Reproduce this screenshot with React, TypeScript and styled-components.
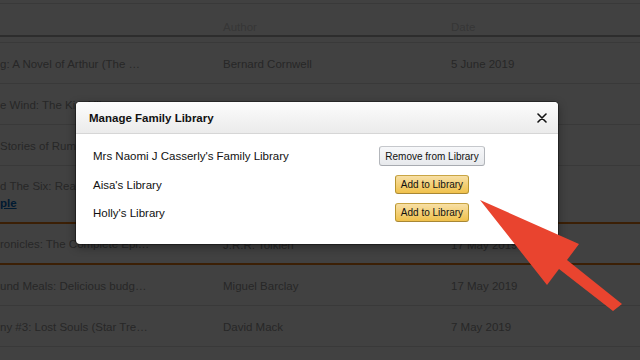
import React from 'react'
import styled, { createGlobalStyle, css } from 'styled-components'

type Book = {
  title: string
  link?: string
  author?: string
  date?: string
  highlighted?: boolean
}

// rows 2-4 sit behind the dialog, only the start of their titles shows
const books: Book[] = [
  { title: 'g: A Novel of Arthur (The …', author: 'Bernard Cornwell', date: '5 June 2019' },
  { title: 'e Wind: The Kingkiller' },
  { title: 'Stories of Rumpole' },
  { title: 'd The Six: Read', link: 'ple' },
  { title: 'ronicles: The Complete Epi…', author: 'J.R.R. Tolkien', date: '17 May 2019', highlighted: true },
  { title: 'und Meals: Delicious budg…', author: 'Miguel Barclay', date: '17 May 2019' },
  { title: 'ny #3: Lost Souls (Star Tre…', author: 'David Mack', date: '7 May 2019' },
  { title: 'ny #2: Mere Mortals (Star …', author: 'David Mack', date: '7 May 2019' },
]

const libraries = [
  { name: "Mrs Naomi J Casserly's Family Library", member: true },
  { name: "Aisa's Library", member: false },
  { name: "Holly's Library", member: false },
]

const GlobalStyle = createGlobalStyle`
  html, body {
    margin: 0;
    padding: 0;
    width: 640px;
    height: 360px;
    overflow: hidden;
    background: #fff;
  }
  body {
    font-family: "Liberation Sans", Arial, Helvetica, sans-serif;
    font-size: 11.5px;
    color: #111;
  }
`

const Page = styled.div`
  position: relative;
  width: 640px;
  height: 360px;
  overflow: hidden;
  padding-top: 3px;
  box-sizing: border-box;
`

const TopRule = styled.div`
  height: 1px;
  background: #e0e0e0;
`

const Columns = css`
  display: grid;
  grid-template-columns: 223px 228px 1fr;
  white-space: nowrap;
`

const HeaderRow = styled.div`
  ${Columns};
  height: 33px;
  align-items: center;
  padding-top: 14px;
  box-sizing: border-box;
  color: #d2d2d2;
  border-bottom: 2px solid #b2b2b2;
`

const HeaderGap = styled.div`
  height: 5px;
  border-bottom: 1px solid #e0e0e0;
`

const Row = styled.div<{ $highlighted?: boolean }>`
  ${Columns};
  min-height: 38px;
  padding-top: 2px;
  align-items: center;
  color: #999;
  border-bottom: 1px solid #e0e0e0;
  ${({ $highlighted }) =>
    $highlighted &&
    css`
      min-height: 34px;
      margin-top: -1px;
      border-top: 2px solid #e77a14;
      border-bottom: 2px solid #e77a14;
    `}
`

const TitleCell = styled.div`
  display: flex;
  flex-direction: column;
  line-height: 17px;
  padding: 10px 0;
  overflow: hidden;
`

const TitleLink = styled.a`
  color: #0066c0;
  font-weight: bold;
  text-decoration: underline;
`

const Overlay = styled.div`
  position: absolute;
  inset: 0;
  background: rgba(0, 0, 0, 0.745);
`

const Modal = styled.div`
  position: absolute;
  left: 76px;
  top: 102px;
  width: 482px;
  background: #fff;
  border-radius: 4px;
  overflow: hidden;
  box-shadow: 0 0 0 1px rgba(0, 0, 0, 0.35), 0 3px 10px rgba(0, 0, 0, 0.4);
`

const ModalHeader = styled.div`
  display: flex;
  align-items: center;
  justify-content: space-between;
  height: 31px;
  padding: 0 11px 0 13px;
  background: linear-gradient(#fcfcfc, #ebebeb);
  border-bottom: 1px solid #d6d6d6;
`

const ModalTitle = styled.h4`
  margin: 0;
  font-size: 11.5px;
  font-weight: bold;
  color: #111;
`

const CloseButton = styled.button`
  display: flex;
  padding: 0;
  border: 0;
  background: none;
  cursor: pointer;
`

const ModalBody = styled.div`
  display: grid;
  grid-template-columns: 1fr 218px;
  row-gap: 9px;
  align-items: center;
  padding: 12px 17px 22px 17px;
`

const LibraryName = styled.div`
  color: #111;
`

const ButtonCell = styled.div`
  display: flex;
  justify-content: center;
`

const LibraryButton = styled.button<{ $primary?: boolean }>`
  height: 19px;
  padding: 0 5px;
  font-family: inherit;
  font-size: 10px;
  color: #111;
  border-radius: 3px;
  cursor: pointer;
  border: 1px solid;
  ${({ $primary }) =>
    $primary
      ? css`
          background: linear-gradient(#f7dfa5, #f0c14b);
          border-color: #c9a544 #b8952f #a88734;
        `
      : css`
          height: 20px;
          background: linear-gradient(#f7f8fa, #e7e9ec);
          border-color: #c6c8cc #b3b6bb #a8abb1;
        `}
`

const Pointer = styled.svg`
  position: absolute;
  inset: 0;
  pointer-events: none;
`

function CloseIcon() {
  return (
    <svg width="10" height="10" viewBox="0 0 10 10">
      <path d="M1 1 L9 9 M9 1 L1 9" stroke="#111" strokeWidth="1.6" strokeLinecap="round" />
    </svg>
  )
}

export default function App(): JSX.Element {
  return (
    <>
      <GlobalStyle />
      <Page>
        <TopRule />
        <HeaderRow>
          <span />
          <span>Author</span>
          <span>Date</span>
        </HeaderRow>
        <HeaderGap />
        {books.map((book, i) => (
          <Row key={i} $highlighted={book.highlighted}>
            <TitleCell>
              <span>{book.title}</span>
              {book.link && <TitleLink href="#">{book.link}</TitleLink>}
            </TitleCell>
            <span>{book.author}</span>
            <span>{book.date}</span>
          </Row>
        ))}

        <Overlay />

        <Modal role="dialog">
          <ModalHeader>
            <ModalTitle>Manage Family Library</ModalTitle>
            <CloseButton aria-label="Close">
              <CloseIcon />
            </CloseButton>
          </ModalHeader>
          <ModalBody>
            {libraries.map(lib => (
              <React.Fragment key={lib.name}>
                <LibraryName>{lib.name}</LibraryName>
                <ButtonCell>
                  {lib.member ? (
                    <LibraryButton>Remove from Library</LibraryButton>
                  ) : (
                    <LibraryButton $primary>Add to Library</LibraryButton>
                  )}
                </ButtonCell>
              </React.Fragment>
            ))}
          </ModalBody>
        </Modal>

        <Pointer width="640" height="360" viewBox="0 0 640 360">
          <polygon
            points="480,200 579,244 567,260 622,304 613,311 559,269 547,285"
            fill="#e9442f"
          />
        </Pointer>
      </Page>
    </>
  )
}
